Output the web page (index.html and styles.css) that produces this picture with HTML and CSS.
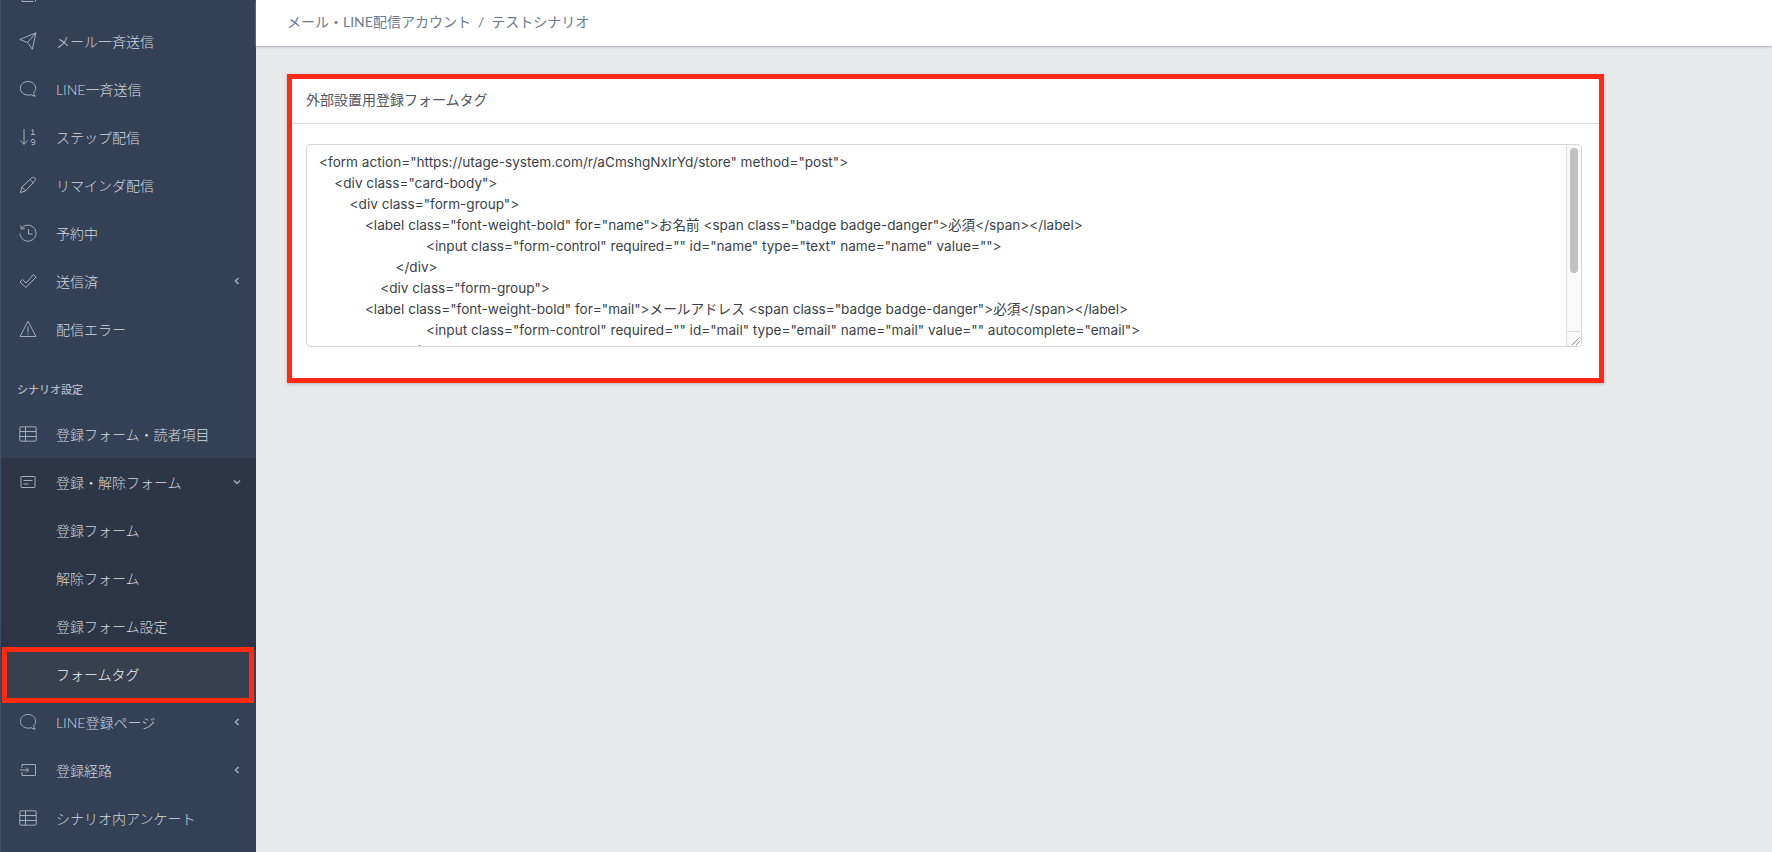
FILE: index.html
```html
<!DOCTYPE html>
<html lang="ja">
<head>
<meta charset="utf-8">
<title>フォームタグ</title>
<link rel="stylesheet" href="styles.css">
</head>
<body>
<svg class="defs" width="0" height="0" aria-hidden="true">
  <symbol id="i-plane" viewBox="0 0 18 18"><path d="M.8 7.500 17 .8 13.300 17.200 8.500 10.500Z"/><path d="M8.500 10.500 17 .8"/></symbol>
  <symbol id="i-chat" viewBox="0 0 18 18"><path d="M9 1.500c4.300 0 7.600 2.900 7.600 6.700 0 1.800-.7 3.400-2 4.600.2 1.200.8 2.400 1.600 3.400-1.500-.1-3-.7-4.200-1.500-.9.300-1.900.4-3 .4-4.300 0-7.600-3-7.600-6.900S4.700 1.500 9 1.500Z"/></symbol>
  <symbol id="i-sort" viewBox="0 0 18 18"><path d="M5 1v15M1.500 12.500 5 16.500l3.500-4M12.500 2.500l1.500-1v5M12 6.500h4M13 11.500h2l.8 1v1.200l-.8.8h-2l-.8-.8v-1.400zM15.800 13.500V16l-.9.700h-2.200"/></symbol>
  <symbol id="i-pencil" viewBox="0 0 18 18"><path d="M1.500 16.500 2.800 11 12.500 2c1.200-1 2.600-1 3.400 0 .8 1 .6 2.300-.4 3.300L6.500 15Z"/><path d="M2.800 11 6.500 15M11 3.500l4 3.800"/></symbol>
  <symbol id="i-history" viewBox="0 0 18 18"><path d="M2.500 4.500A8 8 0 1 1 1 9.500M1.800 1.500 2.300 5l3.500-.4M9.500 5v5h4"/></symbol>
  <symbol id="i-check" viewBox="0 0 18 18"><path d="M1 10 3.500 7.500 7 11 14.500 2.500 17 5 7 15.500Z"/></symbol>
  <symbol id="i-warn" viewBox="0 0 18 18"><path d="M9 1.200 17 16.500H1ZM9 6.500v6M9 13.500v1.300"/></symbol>
  <symbol id="i-table" viewBox="0 0 18 18"><rect x=".8" y="1.800" width="16.400" height="14.400" rx="1.200"/><path d="M.8 6.500h16.400M.8 11.500h16.400M6.500 1.800v14.400"/></symbol>
  <symbol id="i-form" viewBox="0 0 18 18"><rect x="2" y="3.500" width="14" height="11" rx=".6"/><path d="M4.500 7.500h9M4.500 11h5"/></symbol>
  <symbol id="i-input" viewBox="0 0 18 18"><path d="M3 7V3.500h13.500v11H3V11M1 9h8.500M7 6.500 9.500 9 7 11.500"/></symbol>
  <symbol id="i-left" viewBox="0 0 8 8"><path d="M5.500 1 2.500 4l3 3"/></symbol>
  <symbol id="i-down" viewBox="0 0 8 8"><path d="M1 2.500l3 3 3-3"/></symbol>
  <symbol id="i-top" viewBox="0 0 18 18"><path d="M3 8v9.500h11.500M16.500 15v2.500"/></symbol>
</svg>
<div class="app">
  <aside class="sidebar">
    <ul class="nav">
      <li class="item"><svg class="ico"><use href="#i-top"/></svg></li>
      <li class="item"><svg class="ico"><use href="#i-plane"/></svg><span>メール一斉送信</span></li>
      <li class="item"><svg class="ico"><use href="#i-chat"/></svg><span>LINE一斉送信</span></li>
      <li class="item"><svg class="ico"><use href="#i-sort"/></svg><span>ステップ配信</span></li>
      <li class="item"><svg class="ico"><use href="#i-pencil"/></svg><span>リマインダ配信</span></li>
      <li class="item"><svg class="ico"><use href="#i-history"/></svg><span>予約中</span></li>
      <li class="item"><svg class="ico"><use href="#i-check"/></svg><span>送信済</span><svg class="chev"><use href="#i-left"/></svg></li>
      <li class="item"><svg class="ico"><use href="#i-warn"/></svg><span>配信エラー</span></li>
      <li class="title">シナリオ設定</li>
      <li class="item"><svg class="ico"><use href="#i-table"/></svg><span>登録フォーム・読者項目</span></li>
      <li class="group">
        <div class="item"><svg class="ico"><use href="#i-form"/></svg><span>登録・解除フォーム</span><svg class="chev"><use href="#i-down"/></svg></div>
        <div class="item sub">登録フォーム</div>
        <div class="item sub">解除フォーム</div>
        <div class="item sub">登録フォーム設定</div>
        <div class="item sub active">フォームタグ</div>
      </li>
      <li class="item"><svg class="ico"><use href="#i-chat"/></svg><span>LINE登録ページ</span><svg class="chev"><use href="#i-left"/></svg></li>
      <li class="item"><svg class="ico"><use href="#i-input"/></svg><span>登録経路</span><svg class="chev"><use href="#i-left"/></svg></li>
      <li class="item"><svg class="ico"><use href="#i-table"/></svg><span>シナリオ内アンケート</span></li>
    </ul>
  </aside>
  <div class="content">
    <header class="topbar">
      <ol class="crumbs">
        <li>メール・LINE配信アカウント</li>
        <li class="sep">/</li>
        <li>テストシナリオ</li>
      </ol>
    </header>
    <main class="main">
      <section class="card">
        <div class="card-header">外部設置用登録フォームタグ</div>
        <div class="card-body">
          <div class="code-wrap">
            <textarea class="code" readonly spellcheck="false">&lt;form action="https://utage-system.com/r/aCmshgNxIrYd/store" method="post"&gt;
    &lt;div class="card-body"&gt;
        &lt;div class="form-group"&gt;
            &lt;label class="font-weight-bold" for="name"&gt;お名前 &lt;span class="badge badge-danger"&gt;必須&lt;/span&gt;&lt;/label&gt;
                            &lt;input class="form-control" required="" id="name" type="text" name="name" value=""&gt;
                    &lt;/div&gt;
                &lt;div class="form-group"&gt;
            &lt;label class="font-weight-bold" for="mail"&gt;メールアドレス &lt;span class="badge badge-danger"&gt;必須&lt;/span&gt;&lt;/label&gt;
                            &lt;input class="form-control" required="" id="mail" type="email" name="mail" value="" autocomplete="email"&gt;
                    &lt;/div&gt;</textarea>
            <div class="scrollbar">
              <div class="track"><div class="thumb"></div></div>
              <div class="corner"><svg class="grip" viewBox="0 0 8 8"><path d="M0 8 8 0M4 8 8 4"/></svg></div>
            </div>
          </div>
        </div>
      </section>
    </main>
  </div>
</div>
</body>
</html>
```
FILE: styles.css
```css
* { box-sizing: border-box; }
html, body { margin: 0; height: 100%; overflow: hidden; }
body {
  font-family: Inter, "Noto Sans CJK JP", sans-serif;
  font-size: 14px;
  background: #e8e9eb;
  color: #3b3f47;
}
.defs { position: absolute; }
.app { display: flex; height: 852px; }

.sidebar {
  width: 256px;
  flex: none;
  overflow: hidden;
  background: #334156;
  border-left: 1px solid #3f4d62;
}
.nav { list-style: none; margin: -31px 0 0; padding: 0; }
.item {
  position: relative;
  display: flex;
  align-items: center;
  height: 48px;
  padding-left: 18px;
  padding-bottom: 1px;
  font-family: Lato, "Noto Sans CJK JP", sans-serif;
  font-size: 14px;
  font-weight: 300;
  color: #d4d8de;
  white-space: nowrap;
}
.ico {
  width: 18px;
  height: 18px;
  margin-right: 19px;
  flex: none;
  fill: none;
  stroke: #a5adba;
  stroke-width: 1;
  stroke-linejoin: round;
}
.chev {
  position: absolute;
  right: 15px;
  top: 20px;
  width: 8px;
  height: 8px;
  fill: none;
  stroke: #a4acb8;
  stroke-width: 1.500;
}
.title {
  height: 57px;
  padding: 29px 0 0 16px;
  font-family: Lato, "Noto Sans CJK JP", sans-serif;
  font-size: 11px;
  line-height: 16px;
  font-weight: 500;
  color: #b4bbc6;
}
.group { background: linear-gradient(#2d3646, #2b3545); }
.sub { padding-left: 55px; }
.active { background: #383f4e; color: #f2f3f5; }
.active::after {
  content: "";
  box-sizing: border-box;
  position: absolute;
  left: 1px;
  top: -3px;
  width: 252px;
  height: 56px;
  border: 5px solid #ff2a14;
  pointer-events: none;
}

.content { flex: 1; min-width: 0; }
.topbar {
  height: 46px;
  background: #fff;
  box-shadow: 0 1px 2px #a9aebb;
  padding: 0 0 0 31px;
}
.crumbs {
  list-style: none;
  margin: 0;
  padding: 0;
  display: flex;
  align-items: center;
  height: 42px;
  color: #6d7a8c;
  font-family: Lato, "Noto Sans CJK JP", sans-serif;
}
.sep { padding: 0 7px; }

.main { padding: 28px 168px 0 31px; }
.card {
  position: relative;
  background: #fff;
  box-shadow: 0 1px 3px rgba(60, 65, 80, .3);
  height: 309px;
}
.card::after {
  content: "";
  position: absolute;
  inset: 0;
  border: 5px solid #ff2a14;
  pointer-events: none;
}
.card-header {
  height: 50px;
  padding: 17px 19px 0;
  line-height: 18px;
  border-bottom: 1px solid #d8d9de;
  color: #52565f;
}
.card-body { padding: 20px 22px 0 19px; }
.code-wrap { position: relative; height: 203px; }
.code {
  display: block;
  width: 100%;
  height: 100%;
  padding: 7px 12px 6px;
  border: 1px solid #d5d6dd;
  border-radius: 4px;
  font-family: Inter, "Noto Sans CJK JP", sans-serif;
  font-size: 13.6px;
  line-height: 21px;
  color: #3b3f47;
  background: #fff;
  outline: none;
  resize: none;
  white-space: pre;
  overflow: hidden;
}
.scrollbar {
  position: absolute;
  top: 1px;
  right: 1px;
  bottom: 1px;
  width: 15px;
  display: flex;
  flex-direction: column;
  background: #f9f9f9;
  border-left: 1px solid #dedede;
  border-radius: 0 3px 3px 0;
}
.track { flex: 1; padding: 3px 3px 0; }
.thumb { height: 125px; border-radius: 4px; background: #c1c1c1; }
.corner {
  flex: none;
  height: 15px;
  border-top: 1px solid #dedede;
  display: flex;
  justify-content: flex-end;
  align-items: flex-end;
}
.grip { width: 8px; height: 8px; margin: 0 1px 1px 0; fill: none; stroke: #666; stroke-width: 1; stroke-dasharray: 1 .6; }
```
